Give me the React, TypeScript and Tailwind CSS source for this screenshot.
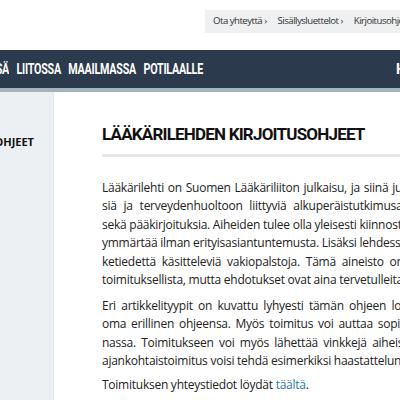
import React from 'react';

const navItems = ['LIITOSSA', 'MAAILMASSA', 'POTILAALLE'];

// lines of the justified paragraphs, with the word spacing each one gets
const para1: [string, string][] = [
  ['Lääkärilehti on Suomen Lääkäriliiton julkaisu, ja siinä julkaistaan', '[word-spacing:1px]'],
  ['siä ja terveydenhuoltoon liittyviä alkuperäistutkimusartikkeleita', '[word-spacing:4px]'],
  ['sekä pääkirjoituksia. Aiheiden tulee olla yleisesti kiinnostavia ja', '[word-spacing:0px]'],
  ['ymmärtää ilman erityisasiantuntemusta. Lisäksi lehdessä on', '[word-spacing:0px]'],
  ['ketiedettä käsitteleviä vakiopalstoja. Tämä aineisto on', '[word-spacing:3px]'],
  ['toimituksellista, mutta ehdotukset ovat aina tervetulleita.', '[word-spacing:0px]'],
];

const para2: [string, string][] = [
  ['Eri artikkelityypit on kuvattu lyhyesti tämän ohjeen lopussa', '[word-spacing:2.5px]'],
  ['oma erillinen ohjeensa. Myös toimitus voi auttaa sopivan', '[word-spacing:2px]'],
  ['nassa. Toimitukseen voi myös lähettää vinkkejä aiheista', '[word-spacing:2.5px]'],
  ['ajankohtaistoimitus voisi tehdä esimerkiksi haastattelun.', '[word-spacing:0px]'],
];

const App = () => {
  return (
    <div className="w-[400px] h-[400px] overflow-hidden bg-white text-[#222]" style={{ fontFamily: '"Open Sans", sans-serif' }}>
      {/* top bar with breadcrumb */}
      <div className="h-[50px] flex justify-end pt-[10px]">
        <div className="h-[23px] w-[195px] bg-[#eef0f2] flex items-center gap-[11px] pl-[8px] whitespace-nowrap text-[9.6px] text-[#333] overflow-hidden tracking-[-0.5px]">
          <span>Ota yhteyttä ›</span>
          <span>Sisällysluettelot ›</span>
          <span>Kirjoitusohjeet</span>
        </div>
      </div>

      {/* main nav - condensed face, so the row is squeezed horizontally */}
      <div className="h-[38px] bg-[#2c3a4d] flex items-center justify-between overflow-hidden text-white font-bold text-[14.5px] tracking-[-0.3px] pt-[2px]" style={{ fontFamily: 'Roboto, sans-serif' }}>
        <div className="flex gap-[10px] whitespace-nowrap ml-[-5px] origin-left scale-x-[0.74]">
          {/* first item only peeks in at the left edge */}
          <span className="w-[19px] overflow-hidden flex justify-end">
            <span>TIETEESSÄ</span>
          </span>
          {navItems.map((n) => (
            <span key={n}>{n}</span>
          ))}
        </div>
        <span className="w-[4px] overflow-hidden">HAKU</span>
      </div>
      <div className="h-[4px] bg-[#a2b4bc]" />

      <div className="flex">
        {/* sidebar */}
        <div className="w-[54px] h-[310px] shrink-0 bg-[#edf0f2] border-r border-[#e2e6e9] overflow-hidden flex justify-end pt-[42px]">
          <span className="whitespace-nowrap font-bold text-[11px] pr-[19px] h-fit text-[#111]">KIRJOITUSOHJEET</span>
        </div>

        {/* content */}
        <div className="pl-[48px] pt-[30px]">
          <h1 className="whitespace-nowrap font-bold text-[17px] text-[#111] tracking-[-0.8px] pb-[6px] border-b-[3px] border-[#e5e7e9] w-[320px]" style={{ fontFamily: 'Roboto, sans-serif' }}>
            LÄÄKÄRILEHDEN KIRJOITUSOHJEET
          </h1>
          <div className="mt-[22px] text-[12px] leading-[18.5px] tracking-[-0.25px]">
            {para1.map(([l, ws]) => (
              <div key={l} className={`whitespace-nowrap ${ws}`}>{l}</div>
            ))}
          </div>
          <div className="mt-[7px] text-[12px] leading-[18.5px] tracking-[-0.25px]">
            {para2.map(([l, ws]) => (
              <div key={l} className={`whitespace-nowrap ${ws}`}>{l}</div>
            ))}
          </div>
          <p className="mt-[5px] text-[12px] leading-[18.5px] tracking-[-0.25px] whitespace-nowrap">
            Toimituksen yhteystiedot löydät <a className="text-[#2a79b8]">täältä</a>.
          </p>
        </div>
      </div>
    </div>
  );
};

export default App;
